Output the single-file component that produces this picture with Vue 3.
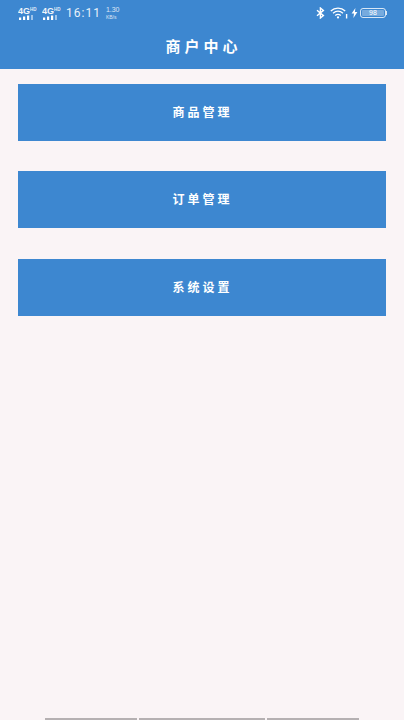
<script setup>
const items = ['商品管理', '订单管理', '系统设置']
const bars = [92, 126, 92]
</script>

<template>
  <div class="page">
    <header class="header">
      <div class="status">
        <div class="left">
          <div v-for="n in 2" :key="n" class="net">
            <div class="net-top"><span class="g">4G</span><span class="hd">HD</span></div>
            <svg class="signal" width="18" height="5" viewBox="0 0 18 5">
              <rect x="1" y="2.5" width="2.2" height="2.5" fill="#fff" />
              <rect x="5" y="1.5" width="2.2" height="3.5" fill="#fff" />
              <rect x="9" y="0.5" width="2.2" height="4.5" fill="#fff" />
              <rect x="13" y="0" width="2" height="5" fill="#fff" opacity="0.5" />
            </svg>
          </div>
          <span class="time">16:11</span>
          <div class="speed"><span>1.30</span><span class="unit">KB/s</span></div>
        </div>
        <div class="right">
          <svg width="9" height="12" viewBox="0 0 9 12" fill="none" stroke="#fff" stroke-width="1.4">
            <path d="M1 3.2 7.4 8.6 4.4 11V1L7.4 3.4 1 8.8" />
          </svg>
          <svg width="18" height="12" viewBox="0 0 18 12" fill="none" stroke="#fff" stroke-width="1.3">
            <path d="M.8 4C4.8.2 11.2.2 15.2 4" />
            <path d="M3 6.3C6 3.7 10 3.7 13 6.3" />
            <path d="M5.2 8.4C7 7 9 7 10.8 8.4" />
            <circle cx="8" cy="10.4" r="1.1" fill="#fff" stroke="none" />
            <path d="M16.6 7V11.5" stroke-width="1.4" />
          </svg>
          <svg class="bolt" width="7" height="10" viewBox="0 0 7 10">
            <path d="M4.4 0 .6 5.6H3L2.4 10 6.4 4H3.9Z" fill="#fff" />
          </svg>
          <div class="battery">
            <div class="cell"><span>98</span></div>
            <div class="cap"></div>
          </div>
        </div>
      </div>
      <h1 class="title">商户中心</h1>
    </header>

    <main class="list">
      <button v-for="item in items" :key="item" class="item" type="button">{{ item }}</button>
    </main>

    <div class="nav-bars">
      <span v-for="(w, i) in bars" :key="i" class="nav-bar" :style="{ width: w + 'px' }"></span>
    </div>
  </div>
</template>

<style scoped>
.page {
  height: 720px;
  background: #faf4f6;
  display: flex;
  flex-direction: column;
  font-family: "Noto Sans CJK SC", "Noto Sans", sans-serif;
  overflow: hidden;
}
.header {
  height: 69px;
  background: #3d87d0;
  color: #fff;
  flex: none;
}
.status {
  height: 26px;
  padding: 0 17px 0 18px;
  display: flex;
  justify-content: space-between;
  align-items: center;
}
.left, .right {
  display: flex;
  align-items: center;
}
.net {
  width: 24px;
  display: flex;
  flex-direction: column;
}
.net-top {
  display: flex;
  align-items: flex-start;
  height: 8px;
  line-height: 8px;
}
.g {
  font: 700 9px/8px "Liberation Sans", sans-serif;
  opacity: 0.92;
}
.hd {
  font: 700 4.5px/5px "Liberation Sans", sans-serif;
  opacity: 0.85;
}
.signal {
  display: block;
}
.time {
  font: 400 12px/14px "Roboto", sans-serif;
  letter-spacing: 1px;
  opacity: 0.88;
}
.speed {
  margin-left: 5px;
  display: flex;
  flex-direction: column;
  font: 400 7px/8px "Liberation Sans", sans-serif;
  opacity: 0.8;
}
.unit {
  font-size: 5px;
  line-height: 6px;
}
.right svg {
  display: block;
}
.right svg + svg {
  margin-left: 5px;
}
.right .bolt {
  margin-left: 3px;
}
.battery {
  margin-left: 2px;
  display: flex;
  align-items: center;
}
.cell {
  width: 26px;
  height: 10px;
  box-sizing: border-box;
  border: 1px solid rgba(255, 255, 255, 0.8);
  border-radius: 3px;
  padding: 1px;
  display: flex;
}
.cell span {
  flex: 1;
  border-radius: 1px;
  background: rgba(255, 255, 255, 0.3);
  font: 400 7px/6px "Liberation Sans", sans-serif;
  text-align: center;
}
.cap {
  width: 1px;
  height: 4px;
  background: rgba(255, 255, 255, 0.8);
}
.title {
  margin: 0;
  height: 39px;
  text-align: center;
  font-size: 15px;
  font-weight: 700;
  line-height: 39px;
  letter-spacing: 4px;
  text-indent: 3px;
}
.list {
  flex: 1;
  padding: 15px 18px 0;
  display: flex;
  flex-direction: column;
  gap: 30.4px;
}
.item {
  height: 57px;
  flex: none;
  padding: 0 0 2px;
  border: 0;
  border-radius: 0;
  background: #3d87d0;
  color: #fff;
  font-family: inherit;
  font-size: 12px;
  font-weight: 700;
  letter-spacing: 3px;
  text-indent: 1px;
}
.nav-bars {
  flex: none;
  height: 2px;
  display: flex;
  justify-content: center;
  gap: 2px;
}
.nav-bar {
  height: 2px;
  background: #b5b0b2;
}
</style>
